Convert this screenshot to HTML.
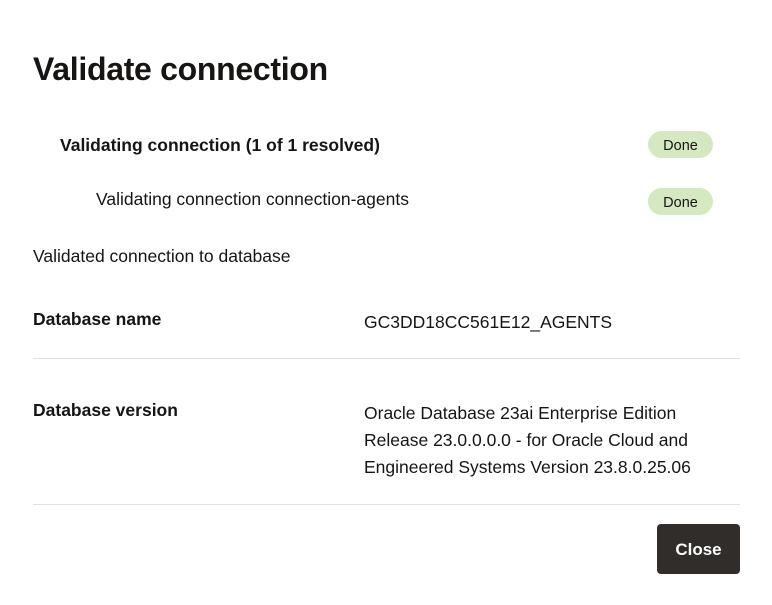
<!DOCTYPE html>
<html><head><style>
body{margin:0;width:772px;height:605px;background:#fff;font-family:"Liberation Sans",sans-serif;color:#161513;position:relative;overflow:hidden}
.a{position:absolute;white-space:nowrap}
.pill{position:absolute;left:648px;width:65px;height:27px;border-radius:14px;background:#d4e9c0;font-size:14.5px;line-height:30px;text-align:center;color:#161513}
.hr{position:absolute;left:33px;width:707px;height:1px;background:#e4e2e0}
</style></head><body>
<div class="a" style="left:33px;top:51px;font-size:32px;font-weight:bold;letter-spacing:-0.3px">Validate connection</div>
<div class="a" style="left:60px;top:135px;font-size:17.5px;font-weight:bold">Validating connection (1 of 1 resolved)</div>
<div class="pill" style="top:131px">Done</div>
<div class="a" style="left:96px;top:189px;font-size:17.5px">Validating connection connection-agents</div>
<div class="pill" style="top:188px">Done</div>
<div class="a" style="left:33px;top:246px;font-size:17.5px">Validated connection to database</div>
<div class="a" style="left:33px;top:309px;font-size:17.5px;font-weight:bold">Database name</div>
<div class="a" style="left:364px;top:312px;font-size:17.5px">GC3DD18CC561E12_AGENTS</div>
<div class="hr" style="top:358px"></div>
<div class="a" style="left:33px;top:400px;font-size:17.5px;font-weight:bold">Database version</div>
<div class="a" style="left:364px;top:400px;font-size:17.5px;line-height:27px">Oracle Database 23ai Enterprise Edition<br>Release 23.0.0.0.0 - for Oracle Cloud and<br>Engineered Systems Version 23.8.0.25.06</div>
<div class="hr" style="top:504px"></div>
<div style="position:absolute;left:657px;top:524px;width:83px;height:50px;background:#312d2a;border-radius:4px;color:#fff;font-size:17px;font-weight:bold;line-height:52px;text-align:center">Close</div>
</body></html>
